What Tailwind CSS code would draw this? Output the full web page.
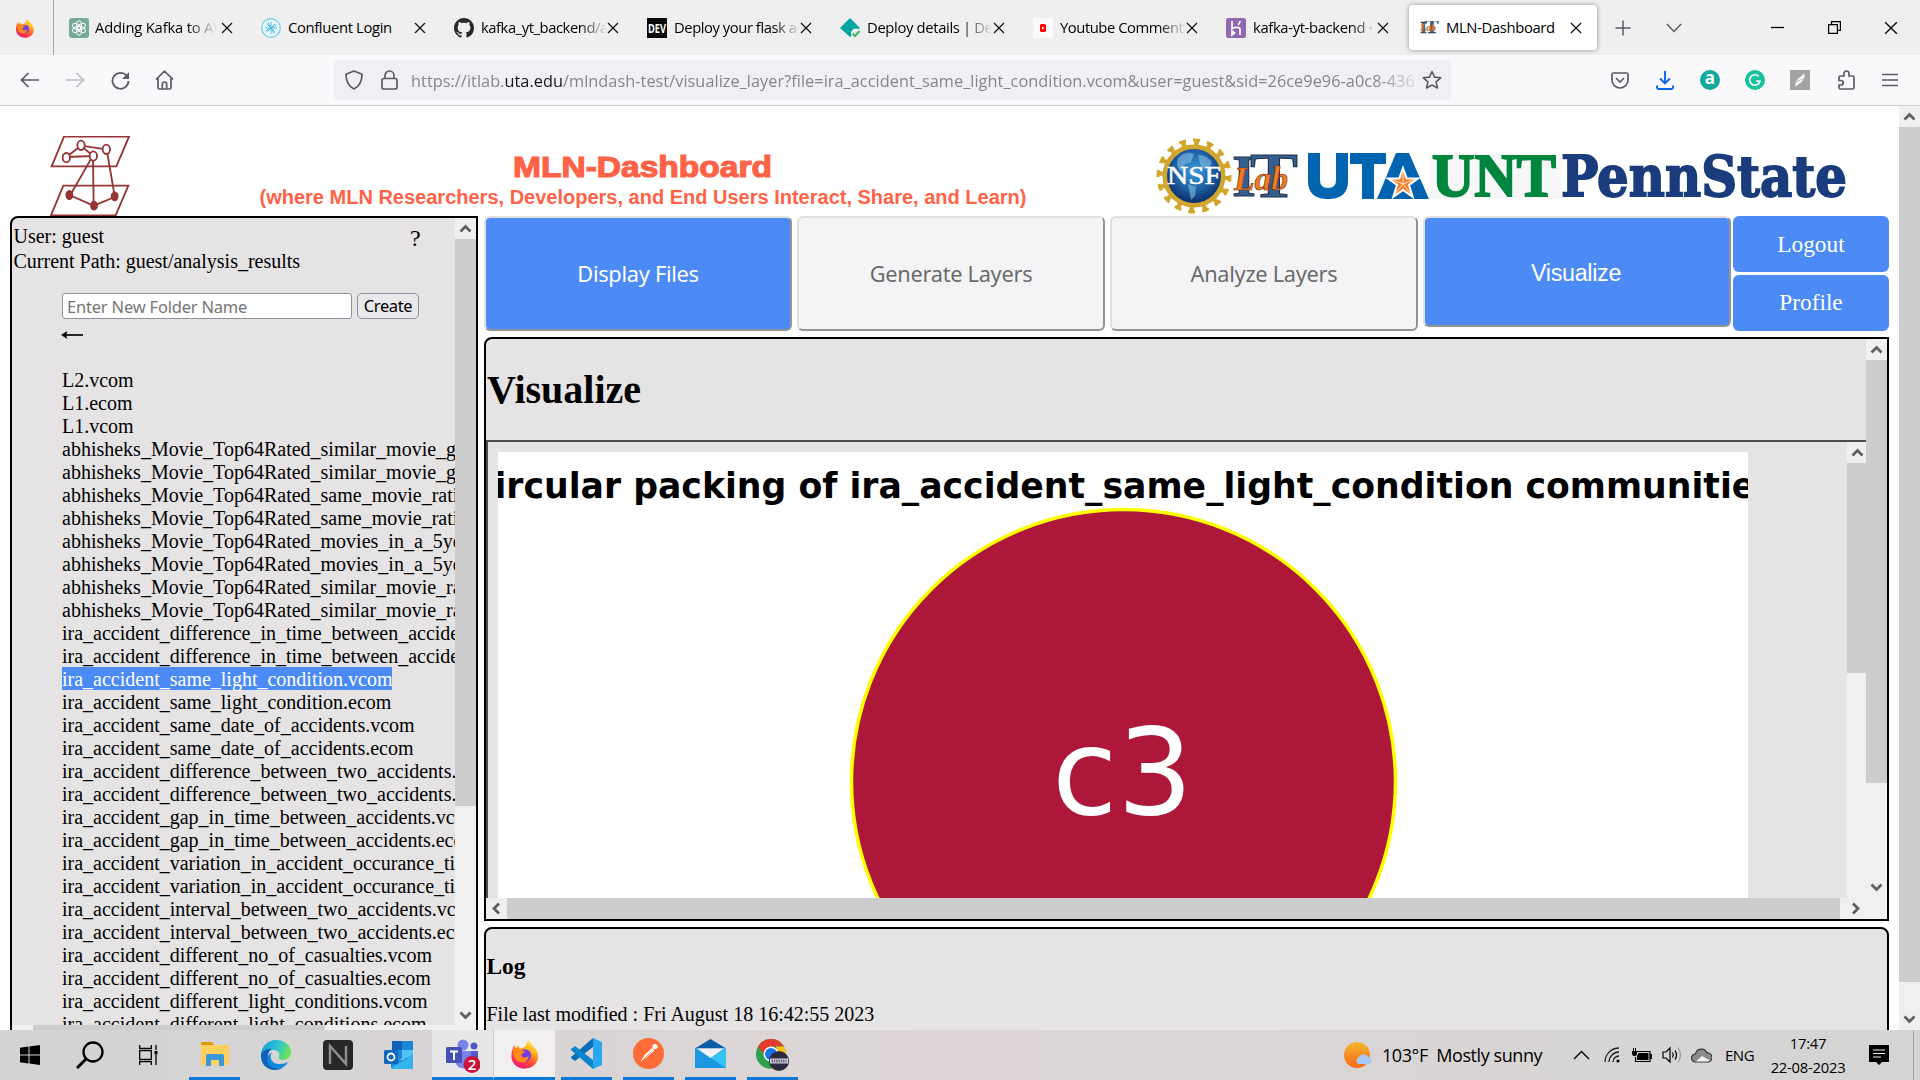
<!DOCTYPE html>
<html lang="en">
<head>
<meta charset="utf-8">
<title>MLN-Dashboard</title>
<script src="https://cdn.jsdelivr.net/npm/@tailwindcss/browser@4"></script>
</head>
<body class="w-[1920px] h-[1080px] overflow-hidden flex flex-col bg-white text-black">

<svg class="absolute w-0 h-0">
  <defs>
    <linearGradient id="fg" x1=".8" y1="0" x2=".3" y2="1"><stop offset="0" stop-color="#fff44f"/><stop offset=".35" stop-color="#ffb01e"/><stop offset=".65" stop-color="#ff5034"/><stop offset="1" stop-color="#f0167c"/></linearGradient>
  </defs>
  <symbol id="x" viewBox="0 0 12 12"><path d="M1 1l10 10M11 1L1 11" stroke="#15141a" stroke-width="1.3" fill="none"/></symbol>
  <symbol id="up" viewBox="0 0 21 21"><path d="M5.5 13.5l5-5 5 5" stroke="#606060" stroke-width="2.8" fill="none"/></symbol>
  <symbol id="down" viewBox="0 0 21 21"><path d="M5.5 7.5l5 5 5-5" stroke="#606060" stroke-width="2.8" fill="none"/></symbol>
  <symbol id="left" viewBox="0 0 21 21"><path d="M13 5.5l-5 5 5 5" stroke="#606060" stroke-width="2.8" fill="none"/></symbol>
  <symbol id="right" viewBox="0 0 21 21"><path d="M8 5.5l5 5-5 5" stroke="#606060" stroke-width="2.8" fill="none"/></symbol>
  <symbol id="fox" viewBox="0 0 32 32">
    <path d="M20 1c1 4 4 5 6 8 2 2 4 5 4 10 0 7-6 12.500-14 12.500S1.500 26 1.500 18C1.500 13 3 9 5 6l1 4 3-3 1 3c3 0 5-1 7-3 0-2 1-4 3-6z" fill="url(#fg)"/>
    <circle cx="16" cy="17.500" r="6.500" fill="#7a3fe0"/>
    <path d="M4 12c3-2 6-2 8 0l4 1c-1 2-4 2-4 4 0 3 4 4 8 1-1 6-6 8-11 6-4-2-6-7-5-12z" fill="#ff8a16"/>
    <path d="M16 10c5-1 8 2 8 6l3-1c-1-4-4-7-8-8z" fill="#ffc02a"/>
  </symbol>
  <symbol id="itlab" viewBox="0 0 67 46">
    <g font-family="Liberation Serif, serif" font-weight="bold" fill="#33608f" stroke="#1d2b45" stroke-width="1">
      <text x="0" y="43" font-size="60" textLength="24" lengthAdjust="spacingAndGlyphs">I</text>
      <text x="18" y="44" font-size="64" textLength="48" lengthAdjust="spacingAndGlyphs">T</text>
    </g>
    <text x="2" y="37" font-family="Liberation Serif, serif" font-style="italic" font-weight="bold" font-size="34" fill="#f47b20" stroke="#5a2d10" stroke-width=".6" textLength="54" lengthAdjust="spacingAndGlyphs">Lab</text>
  </symbol>
</svg>

<!-- Tab strip -->
<header class="h-[55px] shrink-0 bg-[#efefef] flex items-center font-['Open_Sans',sans-serif] text-[14.800px] tracking-[-0.350px]">
  <div class="w-[54px] h-full border-r border-[#a9a9a9] flex items-center pl-[15px]"><svg class="w-5 h-5"><use href="#fox"/></svg></div>
  <div class="w-[193px] flex items-center pl-[15px]">
    <svg class="w-5 h-5 shrink-0" viewBox="0 0 20 20"><rect width="20" height="20" rx="3" fill="#75a99c"/><g fill="none" stroke="#fff" stroke-width="1"><ellipse cx="10" cy="7.200" rx="2.600" ry="4.300"/><ellipse cx="10" cy="7.200" rx="2.600" ry="4.300" transform="rotate(60 10 10)"/><ellipse cx="10" cy="7.200" rx="2.600" ry="4.300" transform="rotate(120 10 10)"/><ellipse cx="10" cy="7.200" rx="2.600" ry="4.300" transform="rotate(180 10 10)"/><ellipse cx="10" cy="7.200" rx="2.600" ry="4.300" transform="rotate(240 10 10)"/><ellipse cx="10" cy="7.200" rx="2.600" ry="4.300" transform="rotate(300 10 10)"/></g></svg>
    <span class="ml-1.5 w-[124px] overflow-hidden whitespace-nowrap tracking-[-0.200px] [mask-image:linear-gradient(to_right,#000_74%,transparent_98%)]">Adding Kafka to AWS</span><svg class="w-3 h-3 ml-0.5"><use href="#x"/></svg>
  </div>
  <div class="w-[193px] flex items-center pl-[14px]">
    <svg class="w-5 h-5 shrink-0" viewBox="0 0 20 20"><circle cx="10" cy="10" r="9.300" fill="#eaf7fc" stroke="#6ccdec" stroke-width="1.200"/><path d="M10 4v12M4 10h12M5.700 5.700l8.600 8.600M14.300 5.700l-8.600 8.600M7 4.500l6 11M4.500 13l11-6" stroke="#3fb8e0" stroke-width=".9"/></svg>
    <span class="ml-[7px] w-[124px] overflow-hidden whitespace-nowrap">Confluent Login</span><svg class="w-3 h-3 ml-0.5"><use href="#x"/></svg>
  </div>
  <div class="w-[193px] flex items-center pl-[14px]">
    <svg class="w-5 h-5 shrink-0" viewBox="0 0 16 16"><path fill="#24292f" d="M8 0C3.580 0 0 3.580 0 8c0 3.540 2.290 6.530 5.470 7.590.4.070.55-.17.55-.38 0-.19-.01-.82-.01-1.490-2.010.37-2.530-.49-2.690-.94-.09-.23-.48-.94-.82-1.130-.28-.15-.68-.52-.01-.53.63-.01 1.080.58 1.230.82.72 1.210 1.870.87 2.330.66.07-.52.28-.87.51-1.070-1.780-.2-3.640-.89-3.640-3.950 0-.87.31-1.590.82-2.150-.08-.2-.36-1.020.08-2.120 0 0 .67-.21 2.200.82.640-.18 1.320-.27 2-.27s1.360.09 2 .27c1.530-1.040 2.200-.82 2.200-.82.440 1.100.160 1.920.080 2.120.510.560.820 1.270.820 2.150 0 3.070-1.870 3.750-3.650 3.950.290.250.540.730.540 1.480 0 1.070-.01 1.930-.01 2.200 0 .210.150.460.550.380A8.010 8.010 0 0 0 16 8c0-4.420-3.580-8-8-8z"/></svg>
    <span class="ml-[7px] w-[124px] overflow-hidden whitespace-nowrap tracking-[-0.450px] [mask-image:linear-gradient(to_right,#000_80%,transparent_102%)]">kafka_yt_backend/app</span><svg class="w-3 h-3 ml-0.5"><use href="#x"/></svg>
  </div>
  <div class="w-[193px] flex items-center pl-[14px]">
    <svg class="w-5 h-5 shrink-0" viewBox="0 0 20 20"><rect width="20" height="20" fill="#0a0a0a"/><text x="1" y="15" font-family="Open Sans, sans-serif" font-weight="bold" font-size="13" fill="#fff" letter-spacing="0" textLength="18" lengthAdjust="spacingAndGlyphs">DEV</text></svg>
    <span class="ml-[7px] w-[124px] overflow-hidden whitespace-nowrap tracking-[-0.450px] [mask-image:linear-gradient(to_right,#000_80%,transparent_102%)]">Deploy your flask app</span><svg class="w-3 h-3 ml-0.5"><use href="#x"/></svg>
  </div>
  <div class="w-[193px] flex items-center pl-[14px]">
    <svg class="w-5 h-5 shrink-0" viewBox="0 0 20 20"><path d="M10 0l10 10-10 9L0 10z" fill="#05a5a3"/><circle cx="16" cy="15.500" r="5" fill="#efefef"/><path d="M12.500 15.500l2.500 2.500 4.500-5" stroke="#3db85c" stroke-width="2" fill="none"/></svg>
    <span class="ml-[7px] w-[124px] overflow-hidden whitespace-nowrap [mask-image:linear-gradient(to_right,#000_76%,transparent_102%)]">Deploy details | Dep</span><svg class="w-3 h-3 ml-0.5"><use href="#x"/></svg>
  </div>
  <div class="w-[193px] flex items-center pl-[14px]">
    <svg class="w-5 h-5 shrink-0" viewBox="0 0 20 20"><rect width="20" height="20" fill="#fbfbfb"/><rect x="7" y="6" width="6" height="8" rx="1.500" fill="#f00"/><path d="M9 8.500l2.500 1.500L9 11.500z" fill="#fff"/></svg>
    <span class="ml-[7px] w-[124px] overflow-hidden whitespace-nowrap tracking-[-0.450px] [mask-image:linear-gradient(to_right,#000_80%,transparent_102%)]">Youtube Comments</span><svg class="w-3 h-3 ml-0.5"><use href="#x"/></svg>
  </div>
  <div class="w-[197px] flex items-center pl-[14px]">
    <svg class="w-5 h-5 shrink-0" viewBox="0 0 20 20"><rect width="20" height="20" rx="2.500" fill="#9068b4"/><path d="M6 3v7.500c3-1.500 8-2 8 1V17M14 3c0 1.500-.8 2.800-1.800 4M6 13l2.500 2L6 17z" stroke="#fff" stroke-width="1.700" fill="none"/></svg>
    <span class="ml-[7px] w-[124px] overflow-hidden whitespace-nowrap [mask-image:linear-gradient(to_right,#000_80%,transparent_102%)]">kafka-yt-backend · H</span><svg class="w-3 h-3"><use href="#x"/></svg>
  </div>
  <div class="w-[188px] h-[45px] bg-white rounded shadow-[0_0_5px_rgba(0,0,0,0.4)] flex items-center pl-[11px]">
    <svg class="w-[19px] h-[13px] shrink-0"><use href="#itlab"/></svg>
    <span class="ml-[7px] w-[124px] whitespace-nowrap">MLN-Dashboard</span><svg class="w-3 h-3"><use href="#x"/></svg>
  </div>
  <svg class="w-4 h-4 ml-[18px]" viewBox="0 0 16 16"><path d="M8 .5v15M.5 8h15" stroke="#5b5b66" stroke-width="1.500"/></svg>
  <svg class="w-4 h-4 ml-[35px]" viewBox="0 0 16 16"><path d="M.8 4L8 11.500 15.200 4" stroke="#5b5b66" stroke-width="1.500" fill="none"/></svg>
  <svg class="w-[13px] h-[13px] ml-[89px]" viewBox="0 0 13 13"><path d="M0 6.500h13" stroke="#000" stroke-width="1.300"/></svg>
  <svg class="w-[13px] h-[13px] ml-[44px]" viewBox="0 0 13 13"><path d="M.6 3.600h8.800v8.800H.6zM3.500 3.500V.6h8.900v8.800H9.500" stroke="#000" stroke-width="1.200" fill="none"/></svg>
  <svg class="w-[14px] h-[14px] ml-[43px]"><use href="#x"/></svg>
</header>

<!-- Toolbar -->
<nav class="h-[51px] shrink-0 bg-[#f9f9fb] border-b border-[#cccccc] flex items-center font-['Open_Sans',sans-serif]">
  <svg class="w-[19px] h-[16px] ml-[20px]" viewBox="0 0 19 16"><path d="M19 8H1.500M8.500 1L1.500 8l7 7" stroke="#5b5b66" stroke-width="1.700" fill="none"/></svg>
  <svg class="w-[19px] h-[16px] ml-[27px]" viewBox="0 0 19 16"><path d="M0 8h17.500M10.500 1l7 7-7 7" stroke="#bfbfc4" stroke-width="1.700" fill="none"/></svg>
  <svg class="w-[19px] h-[19px] ml-[26px]" viewBox="0 0 19 19"><path d="M15.500 4.500A8 8 0 1 0 17.500 10" stroke="#5b5b66" stroke-width="1.800" fill="none"/><path d="M18 1v7h-7z" fill="#5b5b66"/></svg>
  <svg class="w-[19px] h-[20px] ml-[25px]" viewBox="0 0 19 20"><path d="M1 9.500L9.500 1.200 18 9.500M3 8v9.500q0 1.500 1.500 1.500h10q1.500 0 1.500-1.500V8M7.300 19v-5q0-2 2.200-2t2.200 2v5" stroke="#5b5b66" stroke-width="1.700" fill="none"/></svg>
  <div class="ml-[160px] w-[1117px] h-10 rounded bg-[#f0f0f4] flex items-center text-[16.300px]">
    <svg class="w-[18px] h-[20px] ml-[11px]" viewBox="0 0 18 20"><path d="M9 1l8 3.300c0 7-2.500 12-8 14.700C3.500 16.300 1 11.300 1 4.300z" stroke="#5b5b66" stroke-width="1.700" fill="none" stroke-linejoin="round"/></svg>
    <svg class="w-[17px] h-[20px] ml-[18px]" viewBox="0 0 17 20"><rect x="1" y="8.500" width="15" height="10.500" rx="2" stroke="#5b5b66" stroke-width="1.700" fill="none"/><path d="M4 8.500V5.500a4.500 4.500 0 0 1 9 0v3" stroke="#5b5b66" stroke-width="1.700" fill="none"/></svg>
    <span class="ml-[13px] pt-[3px] w-[1003px] overflow-hidden whitespace-nowrap text-[#85858c] tracking-[0.045px] [mask-image:linear-gradient(to_right,#000_96%,transparent_101%)]">https://itlab.<span class="text-[#15141a]">uta.edu</span>/mlndash-test/visualize_layer?file=ira_accident_same_light_condition.vcom&amp;user=guest&amp;sid=26ce9e96-a0c8-4360</span>
    <svg class="w-5 h-5 ml-[8px]" viewBox="0 0 20 20"><path d="M10 1.500l2.600 5.600 6 .7-4.500 4.100 1.300 6.100L10 15l-5.400 3 1.300-6.100L1.400 7.800l6-.7z" stroke="#5b5b66" stroke-width="1.600" fill="none" stroke-linejoin="round"/></svg>
  </div>
  <svg class="w-[18px] h-[17px] ml-[160px]" viewBox="0 0 18 17"><path d="M2.500 1h13q1.500 0 1.500 1.500V8a8 8 0 0 1-16 0V2.500Q1 1 2.500 1zM5 6l4 4 4-4" stroke="#5b5b66" stroke-width="1.700" fill="none"/></svg>
  <svg class="w-[18px] h-[20px] ml-[27px]" viewBox="0 0 18 20"><path d="M9 1v12M4 8.500l5 5 5-5M1 15.500v2Q1 19 2.500 19h13q1.500 0 1.500-1.500v-2" stroke="#0a66ee" stroke-width="1.900" fill="none"/></svg>
  <div class="ml-[26px] w-5 h-5 rounded-full bg-[#10a99c] text-white font-bold text-[17px] leading-[16px] text-center">a</div>
  <svg class="w-5 h-5 ml-[25px]" viewBox="0 0 20 20"><circle cx="10" cy="10" r="10" fill="#15c39a"/><path d="M13.800 6.500A5.200 5.200 0 1 0 15 11h-4" stroke="#fff" stroke-width="1.700" fill="none"/></svg>
  <svg class="w-5 h-5 ml-[25px]" viewBox="0 0 20 20"><rect width="20" height="20" fill="#a3a3a3"/><path d="M14.500 3.500v4.500L5.500 11.500 9 8zM14 8.800L11 12.500 5.500 16.500v-4z" fill="#fff"/></svg>
  <svg class="w-[17px] h-[20px] ml-[28px]" viewBox="0 0 17 20"><path d="M1 7.500Q1 6 2.500 6H6V3.500a2.500 2.500 0 0 1 5 0V6h3.500Q16 6 16 7.500v10q0 1.500-1.500 1.500h-12Q1 19 1 17.500V15h2a2 2 0 0 0 0-4.500H1z" stroke="#5b5b66" stroke-width="1.700" fill="none" stroke-linejoin="round"/></svg>
  <svg class="w-4 h-[14px] ml-[27px]" viewBox="0 0 16 14"><path d="M0 1.500h16M0 7h16M0 12.500h16" stroke="#5b5b66" stroke-width="1.500"/></svg>
</nav>

<!-- Page viewport -->
<div class="h-[924px] shrink-0 flex overflow-hidden font-['Liberation_Serif',serif] text-[20px]">
  <main class="w-[1899px] pl-[10px] flex flex-col">
    <div class="h-[110px] shrink-0 flex items-end">
      <svg class="w-[80px] h-[80px] ml-[40px] shrink-0" viewBox="150 108 240 240"><g stroke="#943634" stroke-width="5.500" fill="none"><path d="M192 110h195l-38 89H155zM190 257h195l-38 89H153z"/><path d="M198 172l45-35 76 11M198 171l81-3M243 137l36 31M277 170l-66 115M279 170l2 148M320 148l24 140M208 285l73 32 63-26"/><g fill="#fff"><ellipse cx="199" cy="173" rx="11" ry="14"/><ellipse cx="243" cy="136" rx="11" ry="14"/><ellipse cx="280" cy="168" rx="11" ry="14"/><ellipse cx="319" cy="148" rx="11" ry="14"/></g><g fill="#943634"><ellipse cx="208" cy="285" rx="9" ry="12"/><ellipse cx="282" cy="317" rx="9" ry="12"/><ellipse cx="344" cy="289" rx="9" ry="12"/></g></g></svg>
      <div class="ml-[129px] w-[768px] shrink-0 text-center font-bold text-[#ff6347] pb-[7px] whitespace-nowrap">
        <svg class="w-[260px] h-[34px] mx-auto" viewBox="0 0 260 34"><text x="0" y="26" font-family="Liberation Sans, sans-serif" font-weight="bold" font-size="30" fill="#ff6347" stroke="#ff6347" stroke-width="1.200" textLength="259" lengthAdjust="spacingAndGlyphs">MLN-Dashboard</text></svg>
        <div class="font-['Liberation_Sans',sans-serif] text-[20px] leading-[24px]">(where MLN Researchers, Developers, and End Users Interact, Share, and Learn)</div>
      </div>
      <div class="ml-[129px] flex items-center pb-[2px]">
        <svg class="w-[76px] h-[76px]" viewBox="0 0 76 76">
          <defs><radialGradient id="nsf" cx=".5" cy=".4" r=".6"><stop offset="0" stop-color="#3f9bd8"/><stop offset=".6" stop-color="#1d5fa5"/><stop offset="1" stop-color="#0c2f66"/></radialGradient></defs>
          <circle cx="38" cy="38" r="29" fill="none" stroke="#d2a52c" stroke-width="5"/>
          <circle cx="38" cy="38" r="33" fill="none" stroke="#d2a52c" stroke-width="5" stroke-dasharray="4.500 8.460"/>
          <circle cx="38" cy="38" r="36" fill="none" stroke="#d2a52c" stroke-width="3" stroke-dasharray="7 7.137" stroke-dashoffset="1.200"/>
          <circle cx="38" cy="38" r="27" fill="url(#nsf)"/>
          <path d="M22 20q8-8 16-4l-3 8-6 2-2 8q-8-4-5-14zM42 17q10 0 14 8l-5 7-6-3zM32 46l8 3-1 9-4 4z" fill="#8ec7e6" opacity=".55"/>
          <text x="11" y="46" font-family="Liberation Serif, serif" font-size="25" fill="#fff" stroke="#fff" stroke-width=".5" textLength="54" lengthAdjust="spacingAndGlyphs">NSF</text>
        </svg>
        <svg class="w-[67px] h-[46px]"><use href="#itlab"/></svg>
        <svg class="w-[121px] h-[46px] ml-[9px]" viewBox="0 0 121 46"><path d="M0 0h12v27q0 8 8 8t8-8V0h12v28q0 18-20 18T0 28zM42 0h36v11H66v35H54V11H42z" fill="#0064b1"/><path d="M88 0h13l20 46H69z" fill="#0064b1"/><path d="M95 15l3.800 10.500H110L101 32l3.800 12L95 37l-9.800 7L89 32l-9-6.500h11.200z" fill="#f58025" stroke="#fff" stroke-width="2"/><path d="M95 18v13l-8 10M95 31l8 10M95 31l11-4.500M95 31l-11-4.500" stroke="#fff" stroke-width=".8" fill="none"/></svg>
        <svg class="w-[131px] h-[46px] ml-[1px]" viewBox="0 0 131 46"><rect width="131" height="46" fill="#f7f7f7"/><text x="2" y="43" font-family="Liberation Serif, serif" font-weight="bold" font-size="61" fill="#00853e" stroke="#00853e" stroke-width="2" textLength="124" lengthAdjust="spacingAndGlyphs">UNT</text></svg>
        <svg class="w-[288px] h-[52px]" viewBox="0 0 288 52"><text x="0" y="45.500" font-family="DejaVu Serif, serif" font-weight="bold" font-size="56" fill="#1a3c7c" stroke="#1a3c7c" stroke-width="1.800" textLength="286" lengthAdjust="spacingAndGlyphs">PennState</text></svg>
      </div>
    </div>

    <div class="flex h-[814px]">
      <!-- File browser -->
      <aside class="w-[468px] h-[830px] shrink-0 border-2 border-black rounded-tl-lg bg-[#e5e3e4] flex overflow-hidden">
        <div class="w-[443px] shrink-0 h-[812px] flex flex-col overflow-hidden">
          <div class="pl-[1.500px] pt-[6px] h-[75px] leading-[25px] flex justify-between whitespace-nowrap">
            <div>User: guest<br>Current Path: guest/analysis_results</div>
            <div class="w-[45px] text-[24px] mt-[2px]">?</div>
          </div>
          <div class="pl-[50px] flex gap-[5px] text-[16.500px] font-['Noto_Sans',sans-serif]">
            <input class="w-[290px] h-[26px] bg-white border border-[#8f8f9d] rounded-[3px] px-1 placeholder:text-[#757575] tracking-[-0.200px]" placeholder="Enter New Folder Name">
            <button class="w-[62px] h-[26px] border border-[#8f8f9d] rounded-[5px] bg-[#e9e9ed] leading-[24px] tracking-[-0.400px]">Create</button>
          </div>
          <svg class="w-[22px] h-[12px] ml-[49px] mt-[10px] shrink-0" viewBox="0 0 22 12"><path d="M2 6h20" stroke="#111" stroke-width="1.800"/><path d="M0 6l6.500-4-1.500 4 1.500 4z" fill="#000"/></svg>
          <div id="files" class="mt-[27px] ml-[50px] leading-[24px] whitespace-nowrap h-[657px] overflow-hidden"></div>
          <div class="h-[5px] bg-[#f0f0f0] shrink-0 pl-[21px]"><div class="w-[292px] h-full bg-[#cdcdcd]"></div></div>
        </div>
        <div class="w-[21px] h-[812px] shrink-0 bg-[#f0f0f0] flex flex-col">
          <svg class="w-[21px] h-[21px] shrink-0"><use href="#up"/></svg>
          <div class="h-[567px] bg-[#cdcdcd]"></div>
          <svg class="w-[21px] h-[21px] mt-auto mb-[4px]"><use href="#down"/></svg>
        </div>
      </aside>

      <section class="ml-[6px] w-[1405px] shrink-0 flex flex-col">
        <div class="flex h-[121px] shrink-0 font-['Noto_Sans',sans-serif] text-[21.800px] tracking-[-0.300px]">
          <button class="w-[308px] h-[115px] mr-[5px] pt-[1px] bg-[#4c8bf5] text-white rounded-md border-2 border-t-[#e0e0e2] border-l-[#e0e0e2] border-r-[#949494] border-b-[#949494]">Display Files</button>
          <button class="w-[308px] h-[115px] mr-[5px] pt-[1px] bg-[#f4f4f6] text-[#6b6b6b] rounded-md border-2 border-t-[#e0e0e2] border-l-[#e0e0e2] border-r-[#949494] border-b-[#949494]">Generate Layers</button>
          <button class="w-[308px] h-[115px] mr-[5px] pt-[1px] bg-[#f4f4f6] text-[#6b6b6b] rounded-md border-2 border-t-[#e0e0e2] border-l-[#e0e0e2] border-r-[#949494] border-b-[#949494]">Analyze Layers</button>
          <button class="w-[308px] h-[111px] mr-[2px] pt-[4px] pr-[2px] bg-[#4c8bf5] text-white text-[23.300px] rounded-md border-2 border-t-[#e0e0e2] border-l-[#e0e0e2] border-r-[#949494] border-b-[#949494] font-['Liberation_Sans',sans-serif]">Visualize</button>
          <div class="w-[156px] flex flex-col gap-[3px] font-['Liberation_Serif',serif] text-[23.300px] tracking-normal text-white">
            <button class="h-[56px] rounded-md bg-[#4c8bf5]">Logout</button>
            <button class="h-[56px] rounded-md bg-[#4c8bf5] pb-[2px]">Profile</button>
          </div>
        </div>

        <!-- Visualize panel -->
        <div class="h-[584px] shrink-0 border-2 border-black rounded-tl-lg bg-[#e5e3e4] flex flex-col">
          <div class="flex h-[559px]">
            <div class="w-[1380px] flex flex-col">
              <h1 class="h-[101px] pl-[1px] pt-[28px] text-[40px] leading-[46px] font-bold shrink-0">Visualize</h1>
              <div class="border-t-2 border-l-2 border-[#4d4b4c] flex h-[458px]">
                <div class="w-[1359px] pl-[10px] pt-[10px]">
                  <svg class="w-[1250px] h-[446px] bg-white" viewBox="0 0 1250 446">
                    <text x="-29" y="46" font-family="DejaVu Sans, sans-serif" font-weight="bold" font-size="35.500" textLength="1307" lengthAdjust="spacingAndGlyphs">Circular packing of ira_accident_same_light_condition communities</text>
                    <circle cx="625.500" cy="329.500" r="272" fill="#ad183a" stroke="#ffff00" stroke-width="3.500"/>
                    <text x="624.500" y="362" font-family="DejaVu Sans, sans-serif" font-size="119" fill="#fff" text-anchor="middle">c3</text>
                  </svg>
                </div>
                <div class="w-[19px] bg-[#f0f0f0]">
                  <svg class="w-[21px] h-[21px]"><use href="#up"/></svg>
                  <div class="h-[210px] bg-[#cdcdcd]"></div>
                </div>
              </div>
            </div>
            <div class="w-[21px] bg-[#f0f0f0] flex flex-col">
              <svg class="w-[21px] h-[21px]"><use href="#up"/></svg>
              <div class="h-[423px] bg-[#cdcdcd]"></div>
              <svg class="w-[21px] h-[21px] mt-auto"><use href="#down"/></svg>
            </div>
          </div>
          <div class="h-[21px] bg-[#f0f0f0] flex">
            <svg class="w-[21px] h-[21px]"><use href="#left"/></svg>
            <div class="w-[1333px] bg-[#cdcdcd]"></div>
            <svg class="w-[21px] h-[21px] ml-[5px]"><use href="#right"/></svg>
          </div>
        </div>

        <div class="mt-[6px] h-[130px] shrink-0 border-2 border-black rounded-lg bg-[#e5e3e4] pl-[0.500px]">
          <h3 class="font-bold text-[23.400px] leading-[27px] pt-[24px]">Log</h3>
          <p class="mt-[23px] leading-[23px]">File last modified : Fri August 18 16:42:55 2023</p>
        </div>
      </section>
    </div>
  </main>
  <div class="w-[21px] bg-[#f0f0f0] flex flex-col">
    <svg class="w-[21px] h-[21px]"><use href="#up"/></svg>
    <div class="h-[855px] bg-[#cdcdcd]"></div>
    <svg class="w-[21px] h-[21px] mt-auto"><use href="#down"/></svg>
  </div>
</div>

<!-- Taskbar -->
<footer class="h-[50px] shrink-0 relative z-10 flex bg-linear-to-r from-[#d3d3d3] via-[#ded6d6] to-[#d4d4d4] font-['Open_Sans',sans-serif]">
  <div class="w-[60px] flex items-center justify-center"><svg class="w-5 h-5" viewBox="0 0 20 20"><path d="M0 2.800L8.500 1.600v8H0zM9.500 1.500L20 0v9.600H9.500zM0 10.500h8.500v8L0 17.300zM9.500 10.500H20V20L9.500 18.600z"/></svg></div>
  <div class="w-[60px] flex items-center justify-center"><svg class="w-[28px] h-[28px]" viewBox="0 0 28 28"><circle cx="17" cy="11" r="9.500" fill="none" stroke="#000" stroke-width="2.300"/><path d="M10 18L1 27" stroke="#000" stroke-width="3"/></svg></div>
  <div class="w-[58px] flex items-center justify-center"><svg class="w-5 h-5" viewBox="0 0 20 20"><path d="M.7 0v3.500h11.600V0M.7 20v-3.500h11.600V20M.7 5.700h11.600v8.600H.7zM17 0v5M17 10v10" stroke="#000" stroke-width="1.300" fill="none"/><path d="M15.500 6h3v3.500h-3z"/></svg></div>
  <div class="w-[11px]"></div>
  <div class="w-[51px] flex items-center justify-center border-b-[3px] border-[#0b78d7]"><svg class="w-[28px] h-[24px]" viewBox="0 0 28 24"><path d="M0 0h11l3 4H0z" fill="#dd9a0c"/><path d="M0 3h28v20H0z" fill="#fdd05e"/><path d="M5 24V14q0-2 2-2h14q2 0 2 2v10h-5v-6h-8v6z" fill="#3a97dc"/></svg></div>
  <div class="w-[71px] flex items-center justify-center"><svg class="w-[31px] h-[30px]" viewBox="0 0 31 30"><defs><linearGradient id="eg" x1="0" y1="0" x2="1" y2=".3"><stop offset="0" stop-color="#1294d8"/><stop offset=".6" stop-color="#2cc6d6"/><stop offset="1" stop-color="#6be05a"/></linearGradient></defs><path d="M1 14C2 5 9 0 16 0c9 0 15 6 15 12 0 5-4 8-8 8-3 0-5-1-4-3 1-3 0-7-6-7-5 0-9 2-12 4z" fill="url(#eg)"/><path d="M1 14c2-4 7-6 11-5-4 2-5 7-3 12 2 6 9 8 14 7-2 1-5 2-8 2C6 30 0 23 1 14z" fill="#0f62b8"/><path d="M12 12c-4 6 1 13 8 12 3 0 6-1 8-2-3 6-9 8-15 6-7-3-8-12-1-16z" fill="#1488d8"/></svg></div>
  <div class="w-[54px] flex items-center justify-center"><svg class="w-[30px] h-[30px]" viewBox="0 0 30 30"><rect width="30" height="30" rx="4" fill="#272727"/><path d="M7 24V6l16 18V6" stroke="#8d8d8d" stroke-width="2.500" fill="none"/></svg></div>
  <div class="w-[67px] flex items-center justify-center"><svg class="w-[29px] h-[28px]" viewBox="0 0 29 28"><path d="M8 0h21v18H8z" fill="#1b86d8"/><path d="M8 0h10v9H8z" fill="#0f62b6"/><path d="M18 9h11v9H18z" fill="#4fc5f3"/><path d="M7 14l11 5 11-5v12q0 2-2 2H9q-2 0-2-2z" fill="#1a8ee0"/><path d="M7 27l22-13v12q0 2-2 2H9z" fill="#35b3ee"/><rect y="9" width="14" height="14" rx="1.500" fill="#1068bf"/><circle cx="7" cy="16" r="3.500" fill="none" stroke="#fff" stroke-width="1.800"/></svg></div>
  <div class="w-[61px] bg-[#e8e7e7] flex items-center justify-center border-b-[3px] border-[#0b78d7]"><svg class="w-[34px] h-[34px] mt-1" viewBox="0 0 34 34"><circle cx="17" cy="6" r="5.500" fill="#7b83eb"/><circle cx="28" cy="7" r="3.500" fill="#5059c9"/><path d="M10 12h15v10a8 8 0 0 1-15 3z" fill="#7b83eb"/><path d="M25 12h7v9a5 5 0 0 1-7 4z" fill="#5059c9"/><rect y="8" width="16" height="16" rx="1.500" fill="#464eb8"/><path d="M4 12.500h8M8 12.500v8.500" stroke="#fff" stroke-width="2"/><circle cx="26" cy="25.500" r="8.500" fill="#c8143c"/><text x="26" y="31" text-anchor="middle" font-family="Open Sans, sans-serif" font-weight="600" font-size="15" fill="#fff">2</text></svg></div>
  <div class="w-[62px] bg-[#f1eff0] border-l border-l-[#cfcfcf] flex items-center justify-center border-b-[3px] border-b-[#0b78d7]"><svg class="w-[30px] h-[30px]"><use href="#fox"/></svg></div>
  <div class="w-[6px]"></div>
  <div class="w-[51px] mr-[11px] flex items-center justify-center border-b-[3px] border-[#0b78d7]"><svg class="w-[31px] h-[31px]" viewBox="0 0 31 31"><path d="M22 0l9 4v23l-9 4z" fill="#28a8f0"/><path d="M22 0v9L4 23l-4-3v-1z" fill="#0a6fb8"/><path d="M22 31v-9L4 8l-4 3v1z" fill="#0d86cf"/></svg></div>
  <div class="w-[51px] mr-[11px] flex items-center justify-center border-b-[3px] border-[#0b78d7]"><svg class="w-[31px] h-[31px]" viewBox="0 0 31 31"><circle cx="15.500" cy="15.500" r="15.500" fill="#ff6c37"/><path d="M7.500 24l4-7 7.500-7 2.500 2.500-8 7z" fill="#fff"/><circle cx="22" cy="8.500" r="2.600" fill="#fff"/><path d="M9 23l9-9" stroke="#ff6c37" stroke-width=".8"/></svg></div>
  <div class="w-[51px] mr-[11px] flex items-center justify-center border-b-[3px] border-[#0b78d7]"><svg class="w-[31px] h-[29px]" viewBox="0 0 31 29"><path d="M0 9.500L15.500 0 31 9.500z" fill="#0c5aa8"/><path d="M0 9.500h31V29H0z" fill="#28a7e8"/><path d="M31 9.500V29L15.500 19z" fill="#36c4f2"/><path d="M0 9.500L15.500 19 31 29H0z" fill="#1c97e2"/><path d="M2 9.500h27L15.500 19z" fill="#f4f4f4"/></svg></div>
  <div class="w-[51px] flex items-center justify-center border-b-[3px] border-[#0b78d7]"><svg class="w-[33px] h-[32px] mt-0.5" viewBox="0 0 33 32"><circle cx="15" cy="15" r="15" fill="#2da14c"/><path d="M2 7.500A15 15 0 0 1 28 7.500H15L9 17z" fill="#e33b2e"/><path d="M28 7.500A15 15 0 0 1 15 30l7-12-2-10.500z" fill="#fcc419"/><circle cx="15" cy="15" r="7.500" fill="#fff"/><circle cx="15" cy="15" r="6" fill="#1a73e8"/><circle cx="23" cy="22" r="10" fill="#2b2a40"/><path d="M14 19.500h18v5H14z" fill="#d5d3de"/><path d="M15.500 22h15" stroke="#6b6982" stroke-width="3" stroke-dasharray="1.500 .8"/></svg></div>

  <div class="ml-auto w-[576px] flex items-center text-[18px] whitespace-nowrap">
    <svg class="w-[28px] h-[27px]" viewBox="0 0 28 27"><defs><linearGradient id="sun" x1="0" y1="0" x2="0" y2="1"><stop offset="0" stop-color="#f3b62c"/><stop offset="1" stop-color="#f4691a"/></linearGradient></defs><circle cx="13" cy="13" r="13" fill="url(#sun)"/><path d="M14 22a4 4 0 0 1 1-7 5 5 0 0 1 9 0 3.600 3.600 0 0 1 1 7z" fill="#a9c8f7"/></svg>
    <span class="ml-[10px] w-[191px] tracking-[-0.420px]">103°F&nbsp; Mostly sunny</span>
    <svg class="w-[17px] h-[10px]" viewBox="0 0 17 10"><path d="M1 9l7.500-7.500L16 9" stroke="#111" stroke-width="1.500" fill="none"/></svg>
    <svg class="w-[16px] h-[16px] ml-[14px]" viewBox="0 0 16 16"><path d="M1 15A14 14 0 0 1 15 1M5 15A10 10 0 0 1 15 5M9 15a6 6 0 0 1 6-6" stroke="#222" stroke-width="1.300" fill="none"/><circle cx="14" cy="14" r="1.600"/></svg>
    <svg class="w-[20px] h-[15px] ml-[12px]" viewBox="0 0 20 15"><path d="M5 3.500h13v10H3.500V9" stroke="#000" stroke-width="1.200" fill="none"/><path d="M6.500 5h10v7H5V8zM18 6h2v5h-2zM0 3h5v3q0 2-2.500 2T0 6zM1 0h1v3H1zM3 0h1v3H3z"/></svg>
    <svg class="w-[20px] h-[18px] ml-[10px]" viewBox="0 0 20 18"><path d="M1 6h3l4-4v14l-4-4H1zM10.500 6.500q1.500 2.500 0 5M13 4.500q3 4.500 0 9" stroke="#000" stroke-width="1.200" fill="none"/><path d="M16 1.500q5 7.500 0 15" stroke="#999" stroke-width="1.200" fill="none"/></svg>
    <svg class="w-[21px] h-[15px] ml-[9px]" viewBox="0 0 21 15"><path d="M4.500 14a4 4 0 0 1 0-8A6 6 0 0 1 16 5a4.500 4.500 0 0 1 1 9z" fill="#8b8b8b" stroke="#333" stroke-width="1.200"/><path d="M5 13.500L11 8l8 4.500-2 1z" fill="#f2f2f2"/></svg>
    <span class="ml-[13px] w-[33px] text-[15px] tracking-[-0.500px]">ENG</span>
    <div class="w-[100px] text-center text-[14.800px] leading-[24px] tracking-[-0.250px]">17:47<br>22-08-2023</div>
    <svg class="w-[20px] h-[20px] ml-[11px]" viewBox="0 0 20 20"><path d="M0 0h20v17h-7l-3 3-3-3H0z"/><path d="M4 5h12M4 8.500h12M4 12h8" stroke="#eee" stroke-width="1.200"/></svg>
    <div class="ml-[24px] h-full border-l border-[#a5a5a5]"></div>
  </div>
</footer>

<script>
const files = ["L2.vcom","L1.ecom","L1.vcom",
"abhisheks_Movie_Top64Rated_similar_movie_genres.vcom","abhisheks_Movie_Top64Rated_similar_movie_genres.ecom",
"abhisheks_Movie_Top64Rated_same_movie_rating.vcom","abhisheks_Movie_Top64Rated_same_movie_rating.ecom",
"abhisheks_Movie_Top64Rated_movies_in_a_5year.vcom","abhisheks_Movie_Top64Rated_movies_in_a_5year.ecom",
"abhisheks_Movie_Top64Rated_similar_movie_rating.vcom","abhisheks_Movie_Top64Rated_similar_movie_rating.ecom",
"ira_accident_difference_in_time_between_accidents.vcom","ira_accident_difference_in_time_between_accidents.ecom",
"ira_accident_same_light_condition.vcom","ira_accident_same_light_condition.ecom",
"ira_accident_same_date_of_accidents.vcom","ira_accident_same_date_of_accidents.ecom",
"ira_accident_difference_between_two_accidents.vcom","ira_accident_difference_between_two_accidents.ecom",
"ira_accident_gap_in_time_between_accidents.vcom","ira_accident_gap_in_time_between_accidents.ecom",
"ira_accident_variation_in_accident_occurance_time.vcom","ira_accident_variation_in_accident_occurance_time.ecom",
"ira_accident_interval_between_two_accidents.vcom","ira_accident_interval_between_two_accidents.ecom",
"ira_accident_different_no_of_casualties.vcom","ira_accident_different_no_of_casualties.ecom",
"ira_accident_different_light_conditions.vcom","ira_accident_different_light_conditions.ecom"];
document.getElementById("files").innerHTML = files.map((f, i) =>
  `<div class="${i === 13 ? "w-fit h-[23px] bg-[#4c8bf5] text-white" : "h-[23px]"}">${f}</div>`).join("");
</script>
</body>
</html>
